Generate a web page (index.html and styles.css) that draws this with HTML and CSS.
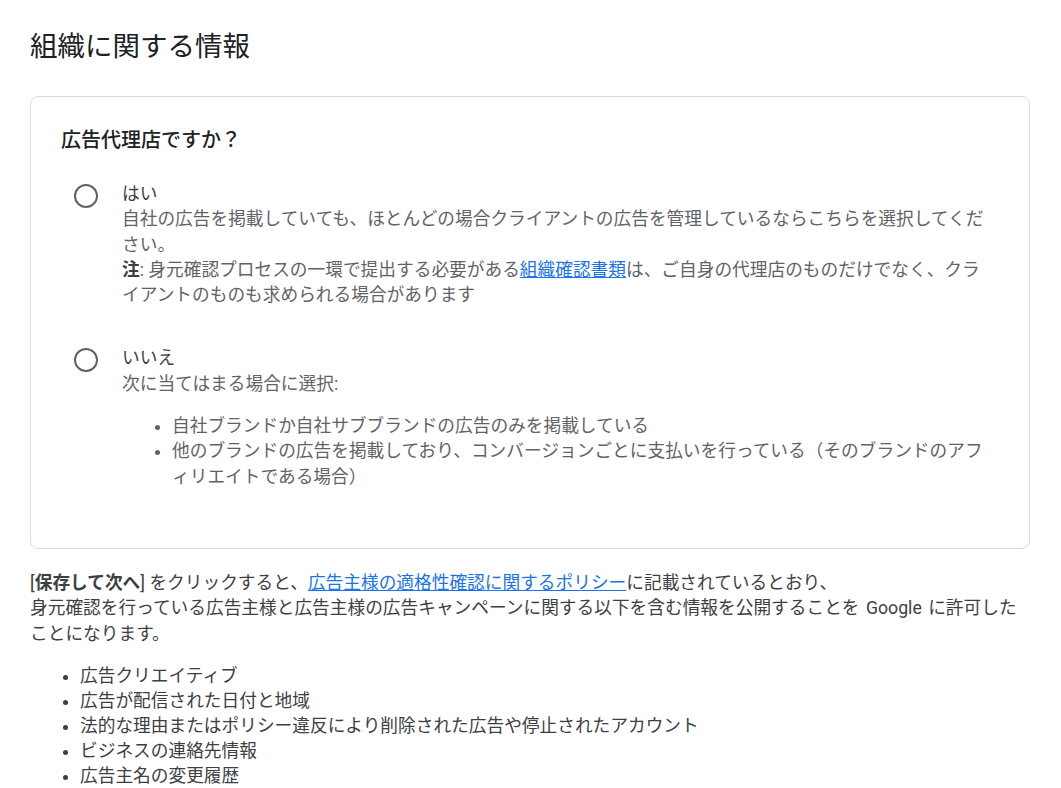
FILE: index.html
```html
<!DOCTYPE html>
<html lang="ja">
<head>
<meta charset="utf-8">
<title>組織に関する情報</title>
<link rel="stylesheet" href="styles.css">
</head>
<body>
<main class="page">
  <h1 class="page-title">組織に関する情報</h1>

  <section class="card">
    <h2 class="card-title">広告代理店ですか？</h2>
    <div class="options">
      <div class="option">
        <span class="radio"><span class="radio-ring"></span></span>
        <div class="option-body">
          <div class="option-label">はい</div>
          <div class="option-desc">自社の広告を掲載していても、ほとんどの場合クライアントの広告を管理しているならこちらを選択してください。</div>
          <div class="option-desc"><b class="strong">注</b>: 身元確認プロセスの一環で提出する必要がある<a class="link" href="#">組織確認書類</a>は、ご自身の代理店のものだけでなく、クライアントのものも求められる場合があります</div>
        </div>
      </div>
      <div class="option">
        <span class="radio"><span class="radio-ring"></span></span>
        <div class="option-body">
          <div class="option-label">いいえ</div>
          <div class="option-desc">次に当てはまる場合に選択:</div>
          <ul class="option-list">
            <li>自社ブランドか自社サブブランドの広告のみを掲載している</li>
            <li>他のブランドの広告を掲載しており、コンバージョンごとに支払いを行っている（そのブランドのアフィリエイトである場合）</li>
          </ul>
        </div>
      </div>
    </div>
  </section>

  <p class="consent">[<b class="strong">保存して次へ</b>] をクリックすると、<a class="link" href="#">広告主様の適格性確認に関するポリシー</a>に記載されているとおり、<br>身元確認を行っている広告主様と広告主様の広告キャンペーンに関する以下を含む情報を公開することを<span class="brand"> Google </span>に許可したことになります。</p>

  <ul class="info-list">
    <li>広告クリエイティブ</li>
    <li>広告が配信された日付と地域</li>
    <li>法的な理由またはポリシー違反により削除された広告や停止されたアカウント</li>
    <li>ビジネスの連絡先情報</li>
    <li>広告主名の変更履歴</li>
  </ul>
</main>
</body>
</html>
```

FILE: styles.css
```css
html, body {
  margin: 0;
  background: #ffffff;
  overflow: hidden;
}

body {
  font-family: Roboto, "Noto Sans CJK JP", sans-serif;
  font-size: 17.7px;
  color: #3c4043;
}

.page {
  padding: 29px 31px 0 30px;
}

.page-title {
  margin: 0 0 31px;
  font-size: 27.5px;
  font-weight: 400;
  line-height: 36px;
  color: #202124;
}

.card {
  border: 1px solid #dadce0;
  border-radius: 8px;
  padding: 29px 33px 58px 30px;
}

.card-title {
  margin: 0;
  font-size: 20px;
  font-weight: 500;
  line-height: 28px;
  color: #202124;
}

.options {
  margin-top: 28px;
  display: flex;
  flex-direction: column;
  gap: 38px;
}

.option {
  display: flex;
  align-items: flex-start;
  gap: 12px;
}

.radio {
  flex: none;
  width: 48px;
  height: 48px;
  margin: -10px 0 -10px 1px;
  display: flex;
  align-items: center;
  justify-content: center;
}

.radio-ring {
  width: 20px;
  height: 20px;
  border: 2px solid #5f6368;
  border-radius: 50%;
}

.option-body {
  flex: 1;
  min-width: 0;
  line-height: 25.3px;
}

.option-label {
  color: #3c4043;
}

.option-desc {
  color: #5f6368;
}

.strong {
  font-weight: 700;
  color: #3c4043;
}

.link {
  color: #1a73e8;
  text-decoration: underline;
}

.option-list {
  margin: 17px 0 0;
  padding-left: 50px;
  color: #5f6368;
}

.consent {
  margin: 22px 0 0;
  line-height: 25.5px;
  color: #3c4043;
}

.brand {
  word-spacing: 2px;
}

.info-list {
  margin: 17px 0 0;
  padding-left: 50px;
  line-height: 24.8px;
  color: #3c4043;
}
```
